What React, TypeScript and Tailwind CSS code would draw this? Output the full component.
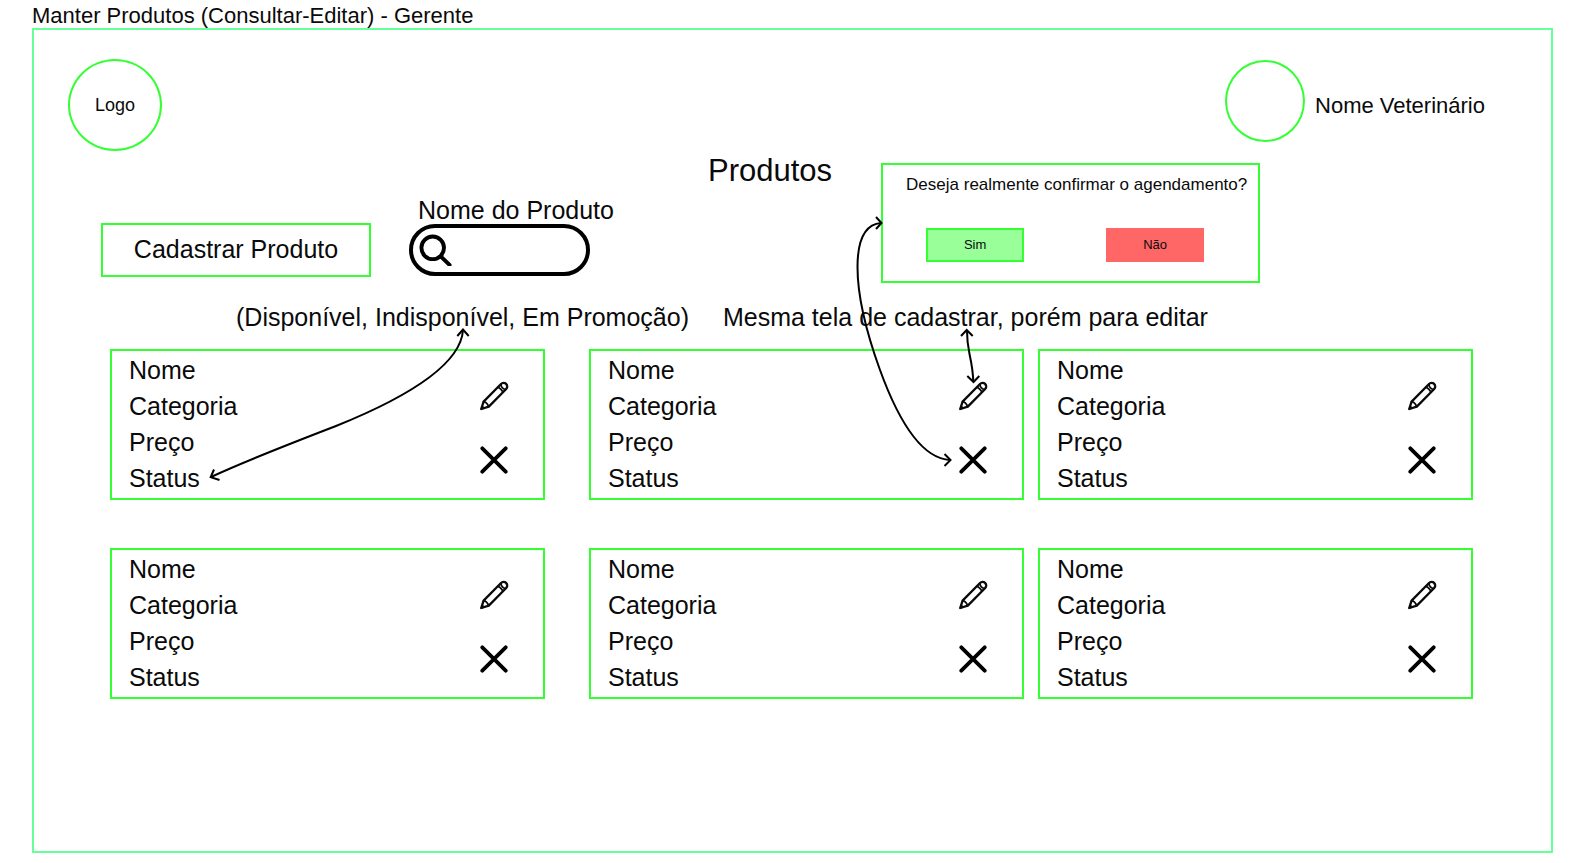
import React from "react";

const FIELDS = ["Nome", "Categoria", "Preço", "Status"];

function PencilIcon() {
  return (
    <svg viewBox="0 0 28 28" className="size-7 overflow-visible" fill="none" stroke="#0a0a0a" strokeWidth="2.3" strokeLinejoin="round" strokeLinecap="round" aria-hidden="true">
      <path d="M1.2 27 L3.6 19.6 L21 2 A3.5 3.5 0 0 1 26.2 7 L8.8 24.6 Z" />
      <path d="M18 5.4 C19.8 5.8 22.4 8.4 22.8 10.2" strokeWidth="1.8" />
      <path d="M21.2 2.8 C20.6 4.6 23.6 7.8 25.6 7.4" strokeWidth="1.7" />
      <path d="M3.6 19.6 C5.6 20 7.8 22.4 8.6 24.4" strokeWidth="1.7" />
      <path d="M1.2 27 L2.2 23.8 L4.6 26 Z" fill="#0a0a0a" strokeWidth="1" />
    </svg>
  );
}

function CrossIcon() {
  return (
    <svg viewBox="0 0 28 28" className="size-7" fill="none" stroke="#000" strokeWidth="3.8" strokeLinecap="round" aria-hidden="true">
      <path d="M2.3 2.3 L25.7 25.7 M25.7 2.3 L2.3 25.7" />
    </svg>
  );
}

function SearchIcon() {
  return (
    <svg viewBox="0 0 34 34" className="pointer-events-none absolute top-2 left-2.5 size-[34px]" fill="none" stroke="#000" strokeWidth="3.9" strokeLinecap="round" aria-hidden="true">
      <circle cx="13.7" cy="15.8" r="11.3" />
      <path d="M22 24.6 L30.6 33" />
    </svg>
  );
}

/* Connector from the status label up to its note; origin is the card's top-left corner. */
function StatusConnector() {
  return (
    <svg className="pointer-events-none absolute top-0 left-0 size-px overflow-visible" fill="none" stroke="#000" strokeWidth="2" aria-hidden="true">
      <path d="M99 126 Q133 110 224 75 Q348 25 351 -21" />
      <path d="M102 118.5 L98.7 126.2 L107.5 129" />
      <path d="M345.3 -15 L351 -21.5 L356.7 -15" />
    </svg>
  );
}

/* Connectors to the edit note and the confirmation box; origin is the card's top-right corner. */
function ActionConnectors() {
  return (
    <svg className="pointer-events-none absolute top-0 right-0 size-px overflow-visible" fill="none" stroke="#000" strokeWidth="2" aria-hidden="true">
      <g>
        <path d="M-54 -20 Q-54 -9 -51.5 3 Q-48 19 -47.7 31" />
        <path d="M-60 -15 L-54.3 -21 L-48.3 -15" />
        <path d="M-53.7 25 L-47.5 31 L-41.7 25" />
      </g>
      <g>
        <path d="M-140 -128 Q-163.5 -126 -163.5 -84 Q-163.5 -43 -141 19 Q-109 107 -71 109" />
        <path d="M-145 -134 L-139.5 -128 L-145 -122" />
        <path d="M-76.5 103 L-70.5 109 L-76.5 115" />
      </g>
    </svg>
  );
}

function ProductCard({ children }: { children?: React.ReactNode }) {
  return (
    <article className="relative flex flex-1 justify-between border-2 border-[#33ff33] pt-px pr-[35px] pb-0.5 pl-[17px]">
      <ul className="text-[25px] leading-9">
        {FIELDS.map((field) => (
          <li key={field}>{field}</li>
        ))}
      </ul>
      <div className="flex flex-col gap-9 pt-[30px]">
        <button type="button" aria-label="Editar" className="size-7">
          <PencilIcon />
        </button>
        <button type="button" aria-label="Excluir" className="size-7">
          <CrossIcon />
        </button>
      </div>
      {children}
    </article>
  );
}

function ConfirmBox() {
  return (
    <section className="mt-[11px] ml-[49px] w-[379px] shrink-0 border-2 border-[#33ff33] pt-2.5 pb-[19px]">
      <p className="pl-[23px] text-[17px] leading-5 whitespace-nowrap">Deseja realmente confirmar o agendamento?</p>
      <div className="mt-[33px] flex gap-[82px] pl-[43px] text-[13px]">
        <button type="button" className="h-[34px] w-[98px] border-2 border-[#33ff33] bg-[#99ff99]">Sim</button>
        <button type="button" className="h-[34px] w-[98px] bg-[#ff6666]">Não</button>
      </div>
    </section>
  );
}

export default function App() {
  return (
    <div className="flex min-h-screen flex-col bg-white pr-[29px] pb-2.5 pl-8 font-['Liberation_Sans',Arial,sans-serif] text-[#0a0a0a]">
      <h1 className="pt-[3px] text-[22px] leading-[25px]">Manter Produtos (Consultar-Editar) - Gerente</h1>
      <main className="flex-1 border-2 border-[#66ff99]">
        <header className="flex items-center justify-between pt-[29px] pr-[66px] pl-[34px]">
          <div className="flex h-[92px] w-[94px] items-center justify-center rounded-[50%] border-2 border-[#33ff33] text-lg">Logo</div>
          <div className="flex items-center gap-2.5 self-stretch">
            <div className="mt-px h-[82px] w-20 self-start rounded-[50%] border-2 border-[#33ff33]" />
            <span className="text-[22px]">Nome Veterinário</span>
          </div>
        </header>

        <div className="mt-px flex items-start pl-[67px]">
          <button type="button" className="mb-1.5 h-[54px] w-[270px] self-end border-2 border-[#33ff33] text-[25px]">Cadastrar Produto</button>
          <div className="mb-[7px] ml-[38px] w-[181px] self-end">
            <label htmlFor="nome-produto" className="block pl-[9px] text-[25px] leading-7 whitespace-nowrap">Nome do Produto</label>
            <div className="relative">
              <input id="nome-produto" type="text" className="block h-[52px] w-full rounded-full border-4 border-black bg-transparent pr-4 pl-12 text-lg outline-none" />
              <SearchIcon />
            </div>
          </div>
          <h2 className="ml-[118px] text-[31px] leading-[38px]">Produtos</h2>
          <ConfirmBox />
        </div>

        <div className="mt-[19px] mb-[17px] flex gap-[34px] pl-[202px] text-[25px] leading-[30px] whitespace-nowrap">
          <p>(Disponível, Indisponível, Em Promoção)</p>
          <p>Mesma tela de cadastrar, porém para editar</p>
        </div>

        <div className="flex flex-col gap-12 pr-[78px] pl-[76px]">
          {[0, 1].map((row) => (
            <div key={row} className="flex gap-11">
              <div className="flex flex-[435]">
                <ProductCard>{row === 0 && <StatusConnector />}</ProductCard>
              </div>
              <div className="flex flex-[884] gap-3.5">
                <ProductCard>{row === 0 && <ActionConnectors />}</ProductCard>
                <ProductCard />
              </div>
            </div>
          ))}
        </div>
      </main>
    </div>
  );
}
